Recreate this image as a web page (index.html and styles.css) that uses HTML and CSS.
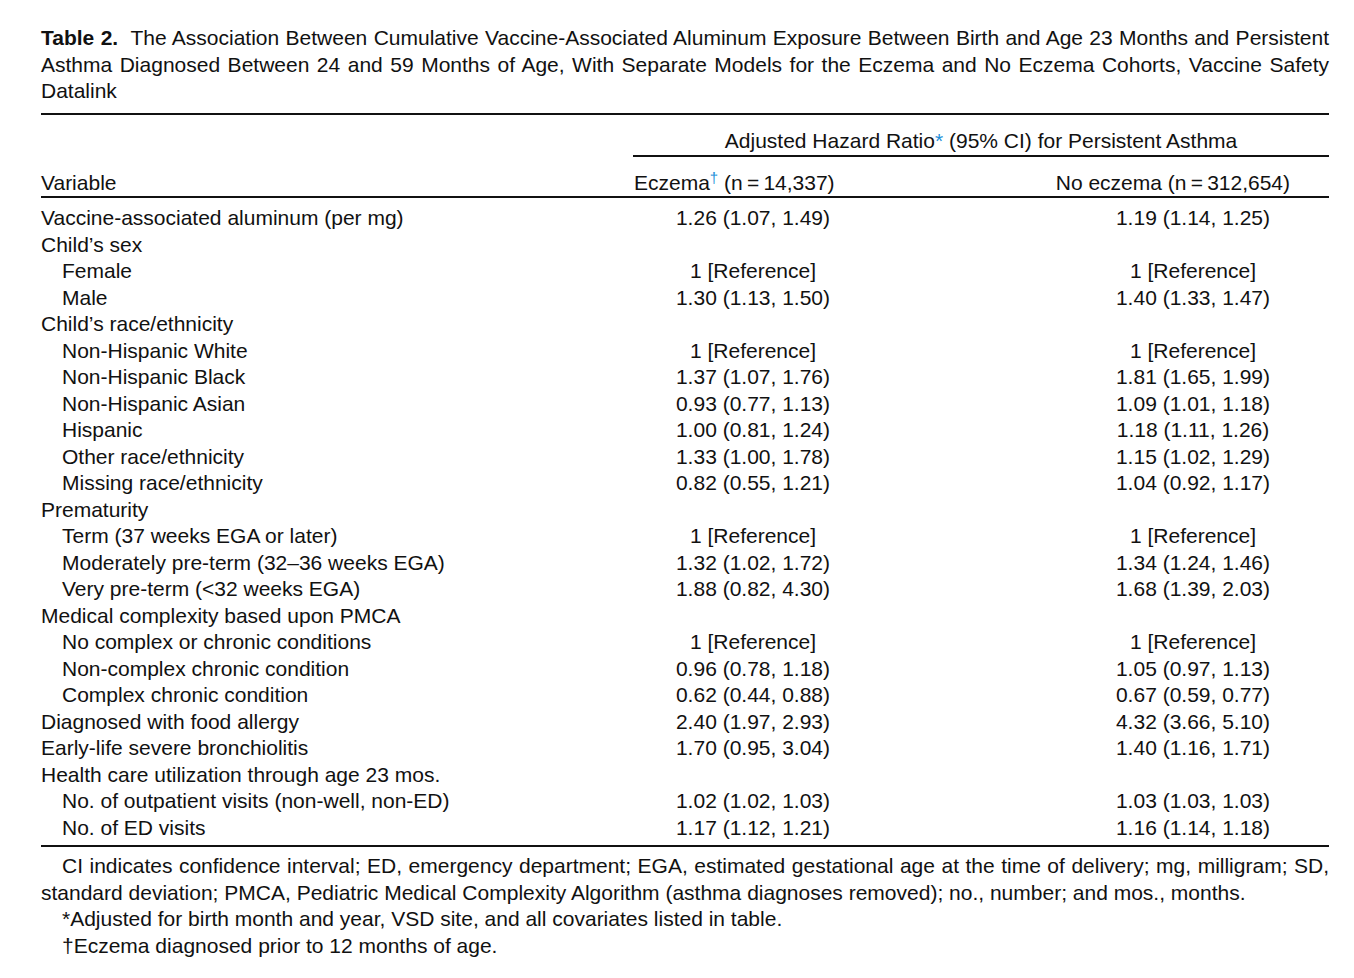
FILE: index.html
```html
<!DOCTYPE html>
<html lang="en">
<head>
<meta charset="utf-8">
<title>Table 2</title>
<link rel="stylesheet" href="styles.css">
</head>
<body>
<div class="page">
  <p class="caption"><b>Table 2.</b>&nbsp; The Association Between Cumulative Vaccine-Associated Aluminum Exposure Between Birth and Age 23 Months and Persistent Asthma Diagnosed Between 24 and 59 Months of Age, With Separate Models for the Eczema and No Eczema Cohorts, Vaccine Safety Datalink</p>
  <table class="tbl">
    <colgroup>
      <col class="c-var">
      <col class="c-val">
      <col class="c-gap">
      <col class="c-val">
      <col class="c-end">
    </colgroup>
    <thead>
      <tr class="spanrow">
        <th class="blank"></th>
        <th class="spanner" colspan="4">Adjusted Hazard Ratio<span class="mark">*</span> (95% CI) for Persistent Asthma</th>
      </tr>
      <tr class="headrow">
        <th class="h-var">Variable</th>
        <th class="h-ecz">Eczema<sup class="mark">†</sup> (n&#8201;=&#8201;14,337)</th>
        <th class="h-no" colspan="3">No eczema (n&#8201;=&#8201;312,654)</th>
      </tr>
    </thead>
    <tbody>
      <tr class="first"><td>Vaccine-associated aluminum (per mg)</td><td class="v">1.26 (1.07, 1.49)</td><td></td><td class="v">1.19 (1.14, 1.25)</td><td></td></tr>
      <tr><td>Child’s sex</td><td class="v"></td><td></td><td class="v"></td><td></td></tr>
      <tr><td class="sub">Female</td><td class="v">1 [Reference]</td><td></td><td class="v">1 [Reference]</td><td></td></tr>
      <tr><td class="sub">Male</td><td class="v">1.30 (1.13, 1.50)</td><td></td><td class="v">1.40 (1.33, 1.47)</td><td></td></tr>
      <tr><td>Child’s race/ethnicity</td><td class="v"></td><td></td><td class="v"></td><td></td></tr>
      <tr><td class="sub">Non-Hispanic White</td><td class="v">1 [Reference]</td><td></td><td class="v">1 [Reference]</td><td></td></tr>
      <tr><td class="sub">Non-Hispanic Black</td><td class="v">1.37 (1.07, 1.76)</td><td></td><td class="v">1.81 (1.65, 1.99)</td><td></td></tr>
      <tr><td class="sub">Non-Hispanic Asian</td><td class="v">0.93 (0.77, 1.13)</td><td></td><td class="v">1.09 (1.01, 1.18)</td><td></td></tr>
      <tr><td class="sub">Hispanic</td><td class="v">1.00 (0.81, 1.24)</td><td></td><td class="v">1.18 (1.11, 1.26)</td><td></td></tr>
      <tr><td class="sub">Other race/ethnicity</td><td class="v">1.33 (1.00, 1.78)</td><td></td><td class="v">1.15 (1.02, 1.29)</td><td></td></tr>
      <tr><td class="sub">Missing race/ethnicity</td><td class="v">0.82 (0.55, 1.21)</td><td></td><td class="v">1.04 (0.92, 1.17)</td><td></td></tr>
      <tr><td>Prematurity</td><td class="v"></td><td></td><td class="v"></td><td></td></tr>
      <tr><td class="sub">Term (37 weeks EGA or later)</td><td class="v">1 [Reference]</td><td></td><td class="v">1 [Reference]</td><td></td></tr>
      <tr><td class="sub">Moderately pre-term (32–36 weeks EGA)</td><td class="v">1.32 (1.02, 1.72)</td><td></td><td class="v">1.34 (1.24, 1.46)</td><td></td></tr>
      <tr><td class="sub">Very pre-term (&lt;32 weeks EGA)</td><td class="v">1.88 (0.82, 4.30)</td><td></td><td class="v">1.68 (1.39, 2.03)</td><td></td></tr>
      <tr><td>Medical complexity based upon PMCA</td><td class="v"></td><td></td><td class="v"></td><td></td></tr>
      <tr><td class="sub">No complex or chronic conditions</td><td class="v">1 [Reference]</td><td></td><td class="v">1 [Reference]</td><td></td></tr>
      <tr><td class="sub">Non-complex chronic condition</td><td class="v">0.96 (0.78, 1.18)</td><td></td><td class="v">1.05 (0.97, 1.13)</td><td></td></tr>
      <tr><td class="sub">Complex chronic condition</td><td class="v">0.62 (0.44, 0.88)</td><td></td><td class="v">0.67 (0.59, 0.77)</td><td></td></tr>
      <tr><td>Diagnosed with food allergy</td><td class="v">2.40 (1.97, 2.93)</td><td></td><td class="v">4.32 (3.66, 5.10)</td><td></td></tr>
      <tr><td>Early-life severe bronchiolitis</td><td class="v">1.70 (0.95, 3.04)</td><td></td><td class="v">1.40 (1.16, 1.71)</td><td></td></tr>
      <tr><td>Health care utilization through age 23 mos.</td><td class="v"></td><td></td><td class="v"></td><td></td></tr>
      <tr><td class="sub">No. of outpatient visits (non-well, non-ED)</td><td class="v">1.02 (1.02, 1.03)</td><td></td><td class="v">1.03 (1.03, 1.03)</td><td></td></tr>
      <tr class="last"><td class="sub">No. of ED visits</td><td class="v">1.17 (1.12, 1.21)</td><td></td><td class="v">1.16 (1.14, 1.18)</td><td></td></tr>
    </tbody>
  </table>
  <div class="notes">
    <p class="abbr">CI indicates confidence interval; ED, emergency department; EGA, estimated gestational age at the time of delivery; mg, milligram; SD, standard deviation; PMCA, Pediatric Medical Complexity Algorithm (asthma diagnoses removed); no., number; and mos., months.</p>
    <p class="fn">*Adjusted for birth month and year, VSD site, and all covariates listed in table.</p>
    <p class="fn">†Eczema diagnosed prior to 12 months of age.</p>
  </div>
</div>
</body>
</html>
```

FILE: styles.css
```css
html, body {
  margin: 0;
  padding: 0;
  background: #fff;
}

body {
  font-family: "Liberation Sans", Arial, Helvetica, sans-serif;
  font-size: 21px;
  line-height: 26.5px;
  color: #111;
}

.page {
  width: 1288px;
  padding: 25px 0 0 41px;
}

.caption {
  margin: 0;
  padding-bottom: 8.5px;
  border-bottom: 2px solid #111;
  text-align: justify;
}

.caption b {
  font-weight: bold;
}

.tbl {
  width: 1288px;
  border-collapse: collapse;
  table-layout: fixed;
}

.c-var { width: 592px; }
.c-val { width: 240px; }
.c-gap { width: 200px; }
.c-end { width: 16px; }

.tbl th,
.tbl td {
  padding: 0;
  font-weight: normal;
  white-space: nowrap;
  vertical-align: bottom;
}

.spanrow th {
  padding-top: 13px;
}

.spanner {
  text-align: center;
  border-bottom: 2px solid #111;
}

.headrow th {
  padding-top: 13px;
  border-bottom: 2px solid #111;
}

.tbl .h-var {
  text-align: left;
}

.tbl .h-ecz {
  text-align: left;
  padding-left: 1px;
}

.tbl .h-no {
  text-align: right;
  padding-right: 39px;
}

.mark {
  color: #1e8fd8;
}

sup.mark {
  font-size: 15px;
  line-height: 0;
  vertical-align: 7px;
}

.tbl td {
  text-align: left;
}

.tbl td.v {
  text-align: center;
}

.tbl td.sub {
  padding-left: 21px;
}

.tbl tr.first td {
  padding-top: 7px;
}

.tbl tr.last td {
  padding-bottom: 4px;
  border-bottom: 2px solid #111;
}

.notes {
  padding-top: 6px;
}

.notes p {
  margin: 0;
}

.abbr {
  text-indent: 21px;
  text-align: justify;
}

.fn {
  padding-left: 21px;
}
```
